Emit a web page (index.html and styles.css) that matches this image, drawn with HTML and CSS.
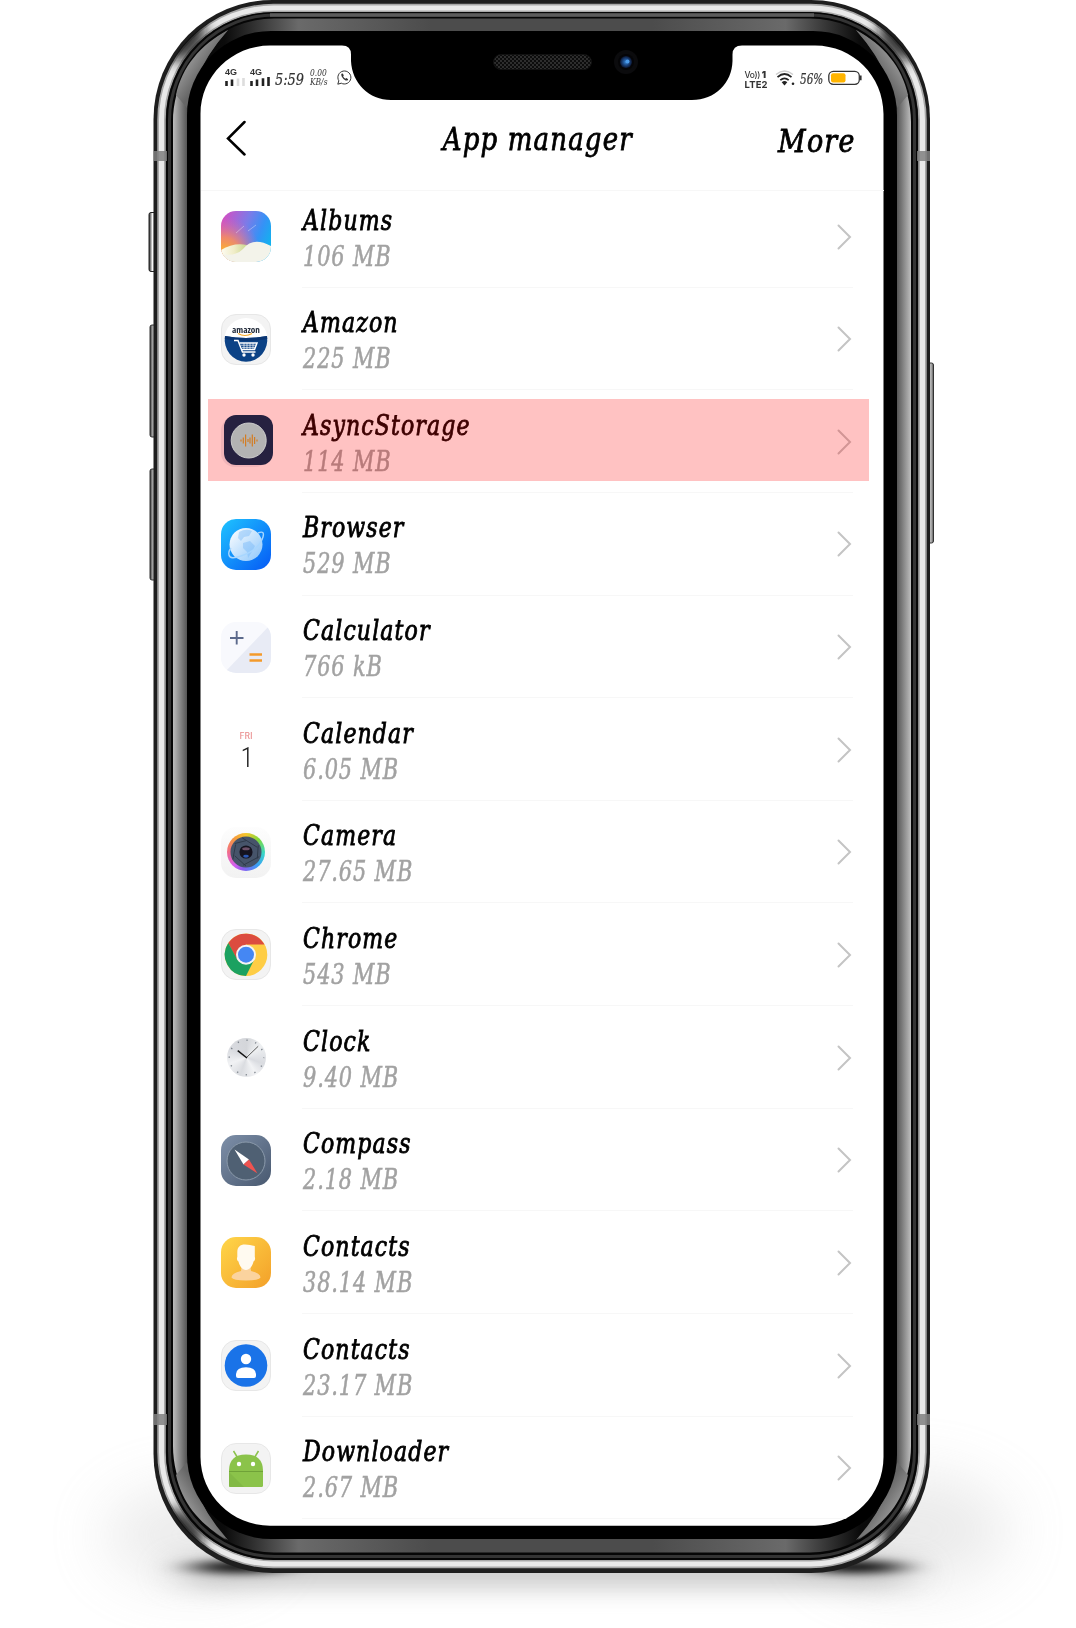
FILE: index.html
```html
<!DOCTYPE html>
<html lang="en">
<head>
<meta charset="utf-8">
<title>App manager</title>
<link rel="stylesheet" href="styles.css">
</head>
<body>
<div class="stage">
<svg class="device" viewBox="0 0 1076 1628" aria-hidden="true">
  <defs>
    <filter id="b5" x="-50%" y="-200%" width="200%" height="500%"><feGaussianBlur stdDeviation="18 4"/></filter>
    <filter id="b14" x="-50%" y="-200%" width="200%" height="500%"><feGaussianBlur stdDeviation="22 13"/></filter>
    <filter id="b30" x="-50%" y="-100%" width="200%" height="300%"><feGaussianBlur stdDeviation="30"/></filter>
    <filter id="b8" x="-50%" y="-50%" width="200%" height="200%"><feGaussianBlur stdDeviation="7"/></filter>
    <linearGradient id="topBevel"><stop offset="0" stop-color="#000"/><stop offset=".07" stop-color="#0b0b0b"/><stop offset=".17" stop-color="#6a6a6a"/><stop offset=".35" stop-color="#4c4c4c"/><stop offset=".65" stop-color="#4c4c4c"/><stop offset=".83" stop-color="#6a6a6a"/><stop offset=".93" stop-color="#0b0b0b"/><stop offset="1" stop-color="#000"/></linearGradient>
    <linearGradient id="sideL" gradientUnits="userSpaceOnUse" x1="173" x2="187"><stop offset="0" stop-color="#bdbdbd"/><stop offset="1" stop-color="#555"/></linearGradient>
    <linearGradient id="sideR" gradientUnits="userSpaceOnUse" x1="897" x2="911"><stop offset="0" stop-color="#555"/><stop offset="1" stop-color="#bdbdbd"/></linearGradient>
    <linearGradient id="bladeL" gradientUnits="userSpaceOnUse" x1="178" y1="60" x2="202" y2="76"><stop offset="0" stop-color="#aaa"/><stop offset="1" stop-color="#666"/></linearGradient>
    <linearGradient id="btn"><stop offset="0" stop-color="#222"/><stop offset=".3" stop-color="#999"/><stop offset=".6" stop-color="#bbb"/><stop offset="1" stop-color="#555"/></linearGradient>
    <linearGradient id="btnHi"><stop offset="0" stop-color="#222"/><stop offset=".45" stop-color="#fff"/><stop offset="1" stop-color="#555"/></linearGradient>
    <pattern id="mesh" width="4" height="4" patternUnits="userSpaceOnUse"><rect width="4" height="4" fill="#0c0c0c"/><circle cx="1" cy="1" r=".9" fill="#3c3c3c"/><circle cx="3" cy="3" r=".9" fill="#3c3c3c"/></pattern>
    <radialGradient id="lens"><stop offset="0" stop-color="#3c8ad8"/><stop offset=".5" stop-color="#1c4a88"/><stop offset="1" stop-color="#0b1530"/></radialGradient>
    <clipPath id="rim"><rect x="156" y="3" width="772" height="1566" rx="117"/></clipPath>
  </defs>
  <g>
    <ellipse cx="190" cy="1535" rx="85" ry="45" fill="#bbb" opacity=".3" filter="url(#b30)"/>
    <ellipse cx="910" cy="1530" rx="100" ry="55" fill="#bbb" opacity=".3" filter="url(#b30)"/>
    <rect x="180" y="1558" width="730" height="28" rx="14" fill="#888" opacity=".5" filter="url(#b14)"/>
    <ellipse cx="240" cy="1567" rx="48" ry="6" fill="#000" filter="url(#b5)"/>
    <ellipse cx="855" cy="1567" rx="48" ry="6" fill="#000" filter="url(#b5)"/>
  </g>
  <rect x="149" y="212.500" width="8" height="59" rx="2" fill="url(#btnHi)" stroke="#222"/>
  <rect x="150" y="325" width="7" height="112" rx="2" fill="url(#btn)" stroke="#333"/>
  <rect x="150" y="469" width="7" height="111" rx="2" fill="url(#btn)" stroke="#333"/>
  <rect x="927" y="363" width="6.500" height="180" rx="2" fill="url(#btn)" stroke="#333"/>
  <rect x="153.500" y="0" width="776.500" height="1573" rx="119" fill="#1e1e1e"/>
  <g clip-path="url(#rim)">
    <rect x="161.500" y="8" width="761" height="1556" rx="112" fill="none" stroke="#a8a8a8" stroke-width="8.500"/>
    <rect x="161.500" y="8" width="761" height="1556" rx="112" fill="none" stroke="#e9e9e9" stroke-width="5"/>
    <g fill="#111" opacity=".85" filter="url(#b8)">
      <ellipse cx="188" cy="42" rx="12" ry="24" transform="rotate(42 188 42)"/>
      <ellipse cx="896" cy="42" rx="12" ry="24" transform="rotate(-42 896 42)"/>
      <ellipse cx="186" cy="1528" rx="12" ry="24" transform="rotate(-42 186 1528)"/>
      <ellipse cx="898" cy="1528" rx="12" ry="24" transform="rotate(42 898 1528)"/>
    </g>
  </g>
  <rect x="166" y="12" width="752" height="1548" rx="108" fill="#060606"/>
  <rect x="169.500" y="15" width="745" height="1541.500" rx="105" fill="none" stroke="#343434" stroke-width="3"/>
  <path d="M270 15H814" stroke="#5c5c5c" stroke-width="3.500"/>
  <rect x="173" y="18.500" width="738" height="1534" rx="101" fill="url(#topBevel)"/>
  <path d="M173 122C173 85 192 50 228 30Q187 76 187 130V1440Q187 1492 226 1540C192 1520 173 1482 173 1446Z" fill="url(#sideL)"/>
  <path d="M911 122C911 85 892 50 856 30Q897 76 897 130V1440Q897 1492 858 1540C892 1520 911 1482 911 1446Z" fill="url(#sideR)"/>
  <path id="blade" d="M176 95C182 67 200 45 228 30Q205 56 195 82L187 108Z" fill="url(#bladeL)"/>
  <use href="#blade" transform="translate(1084) scale(-1 1)"/>
  <use href="#blade" transform="translate(0 1570) scale(1 -1)"/>
  <use href="#blade" transform="translate(1084 1570) scale(-1 -1)"/>
  <rect x="187" y="31" width="710" height="1508" rx="84" fill="#000"/>
  <path fill="#808080" opacity=".85" d="M154 151h13v10h-13zM917 151h13v10h-13zM154 1414h13v11h-13zM917 1414h13v11h-13z"/>
  <path d="M270 45.500H342Q351 45.500 351 54.500V61C352 83 369 100 391 100H692C715 100 732 83 732.500 61V54.500Q732.500 45.500 742 45.500H815C853 45.500 883.500 76 883.500 114V1457C883.500 1495 853 1525.700 815 1525.700H270C232 1525.700 200.500 1495 200.500 1457V114C200.500 76 232 45.500 270 45.500Z" fill="#fff"/>
  <rect x="493.500" y="54.500" width="98" height="15" rx="7.500" fill="url(#mesh)" stroke="#111"/>
  <circle cx="626" cy="62" r="12" fill="#0b0b0d"/><circle cx="626" cy="62" r="8" fill="#050507"/>
  <circle cx="626" cy="62" r="6" fill="url(#lens)"/><circle cx="627.500" cy="61.500" r="2" fill="#4b9bea"/>
</svg>

<main class="screen">
  <div class="status">
    <div class="status-left">
      <div class="signal"><b>4G</b><svg width="20" height="8" viewBox="0 0 20 8"><path d="M1.500 3v5M7 1.500v6.500" stroke="#222" stroke-width="2.600"/><path d="M13 .5v7.500M18.500 0v8" stroke="#ddd" stroke-width="2.600"/></svg></div>
      <div class="signal"><b>4G</b><svg width="20" height="9" viewBox="0 0 20 9"><path d="M1.500 4v5M7 2.500v6.500M13 1.300v7.700M18.500 0v9" stroke="#222" stroke-width="2.600"/></svg></div>
      <span class="time">5:59</span>
      <span class="rate">0.00<br>KB/s</span>
      <svg class="wa" width="15" height="15" viewBox="0 0 15 15"><path d="M.8 14.200L1.800 10.800A6.500 6.500 0 1 1 4.300 13.200Z" fill="none" stroke="#333" stroke-width="1"/><path d="M4.500 3.700C3.200 5.500 7.500 11.500 10.500 10.500L11.200 9.200L9.300 8L8.400 8.800Q6.800 8 6.100 6.300L6.800 5.400L5.800 3.500Z" fill="#333"/></svg>
    </div>
    <div class="status-right">
      <span class="volte"><span class="vo">Vo))</span><b>1</b><br>LTE2</span>
      <svg width="20" height="16" viewBox="0 0 20 16"><path d="M1 4.500Q9.500-2.500 18 4.500" fill="none" stroke="#ccc" stroke-width="1.400"/><path d="M2.500 7.200Q9.500.8 16.500 7.200M5.300 10.200Q9.500 6.500 13.700 10.200" fill="none" stroke="#222" stroke-width="1.700"/><path d="M6.700 12.200Q9.500 10 12.300 12.200L9.500 15.500Z" fill="#222"/><circle cx="18" cy="13.800" r="1.300" fill="#222"/></svg>
      <span class="percent">56%</span>
      <svg width="34" height="16" viewBox="0 0 34 16"><rect x=".8" y="1.300" width="30.500" height="13" rx="4.500" fill="#fff" stroke="#333" stroke-width="1.300"/><rect x="3" y="3.200" width="14.500" height="9.200" rx="2" fill="#ffb400"/><path d="M32.800 5.500v4.800" stroke="#333" stroke-width="1.600"/></svg>
    </div>
  </div>
  <header class="header">
    <svg class="back" width="21" height="36" viewBox="0 0 21 36"><path d="M18.500 2L2 18.500L18.500 34.500" fill="none" stroke="#000" stroke-width="2.500" stroke-linecap="round"/></svg>
    <h1>App manager</h1>
    <span class="more">More</span>
  </header>
  <ul class="list">
    <li class="row">
      <svg class="icon" viewBox="0 0 50 51"><defs><linearGradient id="al" x1="0" y1=".2" x2="1" y2=".6"><stop offset="0" stop-color="#d14fc4"/><stop offset=".45" stop-color="#7c7be8"/><stop offset=".75" stop-color="#3592f6"/><stop offset="1" stop-color="#12b2ee"/></linearGradient><radialGradient id="al2" cx=".05" cy=".85" r=".75"><stop offset="0" stop-color="#ffbe1c"/><stop offset=".45" stop-color="#fb8e5a" stop-opacity=".85"/><stop offset="1" stop-color="#e060b0" stop-opacity="0"/></radialGradient><linearGradient id="al3"><stop offset="0" stop-color="#fdfcf2"/><stop offset=".5" stop-color="#f0edc8"/><stop offset="1" stop-color="#c9d68c"/></linearGradient><clipPath id="sq"><rect width="50" height="51" rx="15"/></clipPath></defs><g clip-path="url(#sq)"><path fill="url(#al)" d="M0 0h50v51H0z"/><path fill="url(#al2)" d="M0 0h50v51H0z"/><path d="M0 39Q13 31 26 34L22 51H0Z" fill="url(#al3)"/><path d="M0 51V43Q14 46 22 38Q32 25 50 35V51Z" fill="#f3f3ea"/><path d="M15 22l8-7M27 20l8-6" stroke="#fff" stroke-opacity=".45" stroke-width=".8"/></g></svg>
      <div class="text"><span class="name">Albums</span><span class="size">106 MB</span></div>
      <svg class="chev" viewBox="0 0 15 26"><path d="M1.500 1.500L13 13L1.500 24.500"/></svg>
    </li>
    <li class="row">
      <svg class="icon" viewBox="0 0 50 51"><rect x=".5" y=".5" width="49" height="50" rx="14.500" fill="#f3f3f3" stroke="#e7e7e7"/><circle cx="25" cy="25.500" r="21.500" fill="#fff"/><path d="M4 22Q25 26 46 22A21.300 22 0 1 1 4 22Z" fill="#0b4286"/><path d="M4 22Q25 26 46 22L46.300 25Q25 29 3.800 25Z" fill="#0a3572"/><text x="25" y="18.500" text-anchor="middle" textLength="28" lengthAdjust="spacingAndGlyphs" font-family="Open Sans, sans-serif" font-weight="700" font-size="8" fill="#222b3a">amazon</text><path d="M17 19.500Q24 23.500 31 19.500" fill="none" stroke="#f5a623" stroke-width="1.200"/><g fill="none" stroke="#fff" stroke-width="1.500"><path d="M13 26.500h4l4.500 11.500h13"/><path d="M18.500 29h17.500l-2.500 6.500H21"/><path d="M20 31.200h15M21 33.400h14M23 29v6M26 29v6M29 29v6M32 29v6" stroke-width=".7"/></g><circle cx="23" cy="41" r="1.700" fill="#fff"/><circle cx="32" cy="41" r="1.700" fill="#fff"/></svg>
      <div class="text"><span class="name">Amazon</span><span class="size">225 MB</span></div>
      <svg class="chev" viewBox="0 0 15 26"><path d="M1.500 1.500L13 13L1.500 24.500"/></svg>
    </li>
    <li class="row marked">
      <svg class="icon async" viewBox="0 0 50 51"><rect x="0" y="3" width="48" height="50" rx="14" fill="#f0b4b8"/><rect x="3" y="1" width="49" height="50" rx="12" fill="#262140"/><circle cx="27.700" cy="26.500" r="17.500" fill="#b3b3b3" stroke="#ccc"/><path d="M20 25.500v2M22.300 23.500v6M24.600 20.500v12M27 25v3M29 23.500v6M31.300 20.500v12M33.600 23v7M36 25.500v2" stroke="#d37c22" stroke-width="1.200"/></svg>
      <div class="text"><span class="name">AsyncStorage</span><span class="size">114 MB</span></div>
      <svg class="chev" viewBox="0 0 15 26"><path d="M1.500 1.500L13 13L1.500 24.500"/></svg>
    </li>
    <li class="row">
      <svg class="icon" viewBox="0 0 50 51"><defs><linearGradient id="br" x1="0" y1="0" x2="1" y2="1"><stop offset="0" stop-color="#1fc4ff"/><stop offset="1" stop-color="#0559f5"/></linearGradient><linearGradient id="br2" x1="0" y1="0" x2="1" y2="1"><stop offset="0" stop-color="#fff"/><stop offset="1" stop-color="#8cc6fb"/></linearGradient></defs><rect width="50" height="51" rx="15" fill="url(#br)"/><circle cx="25" cy="25.500" r="16.500" fill="url(#br2)"/><path d="M18 13q7-4 13-1l-3 5-5 1-3 4-3-3zM22 24l7-2 5 5-2 4-5 8-1-6-4-4z" fill="#6db5f8" opacity=".4"/><path d="M37 14Q44 11 42 18Q38 31 20 37Q9 41 8 36Q7 33 10 29" fill="none" stroke="#a7d6ff" stroke-width="1.400"/></svg>
      <div class="text"><span class="name">Browser</span><span class="size">529 MB</span></div>
      <svg class="chev" viewBox="0 0 15 26"><path d="M1.500 1.500L13 13L1.500 24.500"/></svg>
    </li>
    <li class="row">
      <svg class="icon" viewBox="0 0 50 51"><g clip-path="url(#sq)"><path d="M0 0h50v51H0z" fill="#f8f9fd"/><path d="M50 2V51H3Z" fill="#e8ebf5"/></g><path d="M9 16h13.500M15.700 9v13.500" stroke="#5c6a8c" stroke-width="1.900"/><path d="M28.500 32.500H41M28.500 38.500H41" stroke="#f39a2b" stroke-width="2.300"/></svg>
      <div class="text"><span class="name">Calculator</span><span class="size">766 kB</span></div>
      <svg class="chev" viewBox="0 0 15 26"><path d="M1.500 1.500L13 13L1.500 24.500"/></svg>
    </li>
    <li class="row">
      <svg class="icon" viewBox="0 0 50 51"><text x="25" y="15" text-anchor="middle" font-family="Roboto, sans-serif" font-size="9.500" textLength="13" lengthAdjust="spacingAndGlyphs" fill="#e98b8b">FRI</text><text x="26" y="42.500" text-anchor="middle" font-family="Roboto, sans-serif" font-weight="300" font-size="27" fill="#222">1</text></svg>
      <div class="text"><span class="name">Calendar</span><span class="size">6.05 MB</span></div>
      <svg class="chev" viewBox="0 0 15 26"><path d="M1.500 1.500L13 13L1.500 24.500"/></svg>
    </li>
    <li class="row">
      <div class="icon camera"><div class="ring"><svg viewBox="0 0 34 34"><circle cx="17" cy="17" r="16.500" fill="#46546a"/><path d="M5 8L17 5M13 2L29 12M30 10L29 24M31 22L14 31M17 32L5 21M3 25L6 9" stroke="#2d3746" stroke-width="1" fill="none"/><circle cx="17" cy="17" r="7" fill="#15131f"/><ellipse cx="17" cy="13.500" rx="4" ry="1.600" fill="#6c5068"/><ellipse cx="17" cy="21.500" rx="3" ry="1.500" fill="#2b58b5"/></svg></div></div>
      <div class="text"><span class="name">Camera</span><span class="size">27.65 MB</span></div>
      <svg class="chev" viewBox="0 0 15 26"><path d="M1.500 1.500L13 13L1.500 24.500"/></svg>
    </li>
    <li class="row">
      <svg class="icon" viewBox="0 0 50 51"><rect x=".5" y=".5" width="49" height="50" rx="14.500" fill="#f3f3f3" stroke="#e7e7e7"/><circle cx="25" cy="25.700" r="21.300" fill="#fecd45"/><path d="M25 25.700L16 31 7.300 14A21.300 21.300 0 0 1 43.500 15.500H25Z" fill="#dc4c3f"/><path d="M7.300 14L16.500 31Q24 37 33 31L25 47A21.300 21.300 0 0 1 7.300 14Z" fill="#1ba160"/><circle cx="25" cy="25.700" r="10" fill="#f4f4f4"/><circle cx="25" cy="25.700" r="8" fill="#4587f3"/></svg>
      <div class="text"><span class="name">Chrome</span><span class="size">543 MB</span></div>
      <svg class="chev" viewBox="0 0 15 26"><path d="M1.500 1.500L13 13L1.500 24.500"/></svg>
    </li>
    <li class="row">
      <div class="icon clock"><svg viewBox="0 0 40 40"><circle cx="20" cy="20" r="17.700" fill="none" stroke="#7f868e" stroke-width="1.500" stroke-dasharray="1.300 7.968" stroke-dashoffset=".6"/><path d="M20 20L32 8.500" stroke="#555" stroke-width="1"/><path d="M20.500 20.500L11 13" stroke="#111" stroke-width="1.500"/></svg></div>
      <div class="text"><span class="name">Clock</span><span class="size">9.40 MB</span></div>
      <svg class="chev" viewBox="0 0 15 26"><path d="M1.500 1.500L13 13L1.500 24.500"/></svg>
    </li>
    <li class="row">
      <svg class="icon" viewBox="0 0 50 51"><defs><linearGradient id="co" x1="0" y1="0" x2="1" y2="1"><stop offset="0" stop-color="#7e90a9"/><stop offset="1" stop-color="#48586f"/></linearGradient></defs><rect width="50" height="51" rx="15" fill="url(#co)"/><circle cx="25" cy="26" r="19" fill="#4f6073" stroke="#8b9aab" stroke-width="1"/><path d="M13.500 14.500L28 24.500L22.500 29.500Z" fill="#fff"/><path d="M28 24.500L36.500 38.500L22.500 29.500Z" fill="#ef5350"/></svg>
      <div class="text"><span class="name">Compass</span><span class="size">2.18 MB</span></div>
      <svg class="chev" viewBox="0 0 15 26"><path d="M1.500 1.500L13 13L1.500 24.500"/></svg>
    </li>
    <li class="row">
      <svg class="icon" viewBox="0 0 50 51"><defs><linearGradient id="ct" x1="0" y1="0" x2="1" y2="1"><stop offset="0" stop-color="#ffd649"/><stop offset="1" stop-color="#f3a029"/></linearGradient></defs><rect width="50" height="51" rx="15" fill="url(#ct)"/><path d="M20.500 30L20 34Q10.500 36 10.500 40.500Q12 43.500 25 43.500T39.500 40.500Q39.500 36 30 34L29.500 30Z" fill="#fbd39e"/><path d="M16.300 20V15C16.300 10 19 7.500 24 7.500C28 7.500 30 8.500 33.800 9V20C34.500 21 34 24 32.500 24.500C31.500 29 28.500 33 25 33S18.500 29 17.500 24.500C16 24 15.500 21 16.300 20Z" fill="#fffaf0"/></svg>
      <div class="text"><span class="name">Contacts</span><span class="size">38.14 MB</span></div>
      <svg class="chev" viewBox="0 0 15 26"><path d="M1.500 1.500L13 13L1.500 24.500"/></svg>
    </li>
    <li class="row">
      <svg class="icon" viewBox="0 0 50 51"><rect x=".5" y=".5" width="49" height="50" rx="14.500" fill="#f3f3f3" stroke="#e7e7e7"/><circle cx="25" cy="25.500" r="21.300" fill="#1a73e8"/><circle cx="25" cy="19" r="5.200" fill="#fff"/><path d="M15 34Q15.500 27.500 25 27.300Q34.500 27.500 35 34V36Q35 38 33 38H17Q15 38 15 36Z" fill="#fff"/></svg>
      <div class="text"><span class="name">Contacts</span><span class="size">23.17 MB</span></div>
      <svg class="chev" viewBox="0 0 15 26"><path d="M1.500 1.500L13 13L1.500 24.500"/></svg>
    </li>
    <li class="row">
      <svg class="icon" viewBox="0 0 50 51"><rect x=".5" y=".5" width="49" height="50" rx="14.500" fill="#f3f3f3" stroke="#e7e7e7"/><path d="M12.500 8l4 6.500M37.500 8l-4 6.500" stroke="#8bc34a" stroke-width="1.500"/><path d="M8 28Q8 11.500 25 11.500T42 28V42.500Q42 44 40.500 44H9.500Q8 44 8 42.500Z" fill="#8bc34a"/><path d="M8 28.500h34" stroke="#6fa238"/><path d="M8 29L23 44H9.500Q8 44 8 42.500Z" fill="#82b945"/><circle cx="18" cy="21" r="2.200" fill="#fff"/><circle cx="32" cy="21" r="2.200" fill="#fff"/></svg>
      <div class="text"><span class="name">Downloader</span><span class="size">2.67 MB</span></div>
      <svg class="chev" viewBox="0 0 15 26"><path d="M1.500 1.500L13 13L1.500 24.500"/></svg>
    </li>
  </ul>
</main>
</div>
</body>
</html>
```
FILE: styles.css
```css
* { box-sizing: border-box; }
body { margin: 0; background: #fff; }
.stage { position: relative; width: 1076px; height: 1628px; overflow: hidden; padding: 45px 192.5px 0 201px; }
.device { position: absolute; inset: 0; width: 1076px; height: 1628px; }
.screen { position: relative; height: 1480.700px; overflow: hidden; border-radius: 0 0 69px 69px; font-family: "DejaVu Serif Condensed", "DejaVu Serif", serif; font-stretch: condensed; font-style: italic; }

.status { display: flex; justify-content: space-between; height: 60px; padding: 23px 22px 0 24px; color: #333; }
.status-left, .status-right { display: flex; align-items: flex-start; height: 22px; }
.signal { display: flex; flex-direction: column; width: 20px; height: 18px; justify-content: space-between; margin-right: 5px; font: 700 9px/9px "Liberation Sans", sans-serif; }
.signal b { height: 9px; }
.time { width: 33px; font-size: 17.500px; line-height: 23px; transform: scaleX(.82); transform-origin: 0 0; white-space: nowrap; -webkit-text-stroke: .2px #333; }
.rate { width: 25px; margin-left: 2px; padding-top: 1px; font-size: 8.500px; line-height: 9px; white-space: nowrap; transform: scaleX(.98); transform-origin: 0 0; }
.wa { margin: 2px 0 0 2px; }
.volte { width: 25px; margin-right: 5px; padding-top: 2px; font: 700 9.500px/9px "Inter", sans-serif; white-space: nowrap; letter-spacing: .15px; }
.vo { font-weight: 500; font-size: 8.500px; letter-spacing: -.3px; margin-right: 1.500px; }
.status-right svg { margin-top: 2px; }
.percent { width: 23px; margin: 0 5px; font-size: 14px; line-height: 22px; transform: scaleX(.83); transform-origin: 0 0; -webkit-text-stroke: .2px #333; }

.header { display: grid; grid-template-columns: 180px 1fr 180px; align-items: start; height: 85.500px; padding: 0 26px 0 25px; border-bottom: 1.500px solid #f7f7f7; color: #000; -webkit-text-stroke: .8px #000; }
.back { margin-top: 15px; }
h1 { justify-self: center; margin: 13.500px 0 0 -8px; font-size: 32.500px; line-height: 40px; font-weight: 400; letter-spacing: 1.300px; white-space: nowrap; transform: scaleX(.89); }
.more { justify-self: end; margin: 16px 2px 0 0; font-size: 31.500px; line-height: 40px; letter-spacing: 1.300px; transform: scaleX(.95); transform-origin: 100% 0; }

.list { margin: -5.500px 0 0; padding: 0; list-style: none; }
.row { position: relative; display: flex; height: 102.650px; padding: 0 31px 0 20px; }
.icon { flex: none; width: 50px; height: 51px; margin: 26px 31px 0 0; overflow: visible; font-style: normal; }
.text { flex: 1; display: flex; flex-direction: column; align-items: flex-start; padding: 17.500px 0 0 1px; border-bottom: 1.500px solid #f7f7f7; white-space: nowrap; }
.name { height: 36px; line-height: 36px; font-size: 27.200px; letter-spacing: 1.250px; color: #000; -webkit-text-stroke: .8px #000; transform: scaleX(.9); transform-origin: 0 0; }
.size { height: 36px; line-height: 36px; font-size: 27.200px; letter-spacing: 1px; color: #a2a2a2; -webkit-text-stroke: .5px #a2a2a2; transform: scaleX(.855); transform-origin: 0 0; }
.chev { position: absolute; right: 31.500px; top: 38.500px; width: 15px; height: 26px; fill: none; stroke: #c4c4c4; stroke-width: 2; stroke-linecap: round; }
.marked::after { content: ""; position: absolute; left: 7px; top: 9px; width: 661px; height: 82px; background: rgba(255, 0, 0, .24); }
.async { position: relative; z-index: 1; margin-top: 24px; }
.camera { display: grid; place-items: center; border-radius: 15px; background: linear-gradient(#fdfdfd, #f2f2f2); }
.ring { display: grid; place-items: center; width: 38px; height: 38px; border-radius: 50%; background: conic-gradient(#f6c62b, #7fd93b 45deg, #37d6c9 95deg, #3a9ef5 140deg, #8b5cf0 190deg, #d45df0 220deg, #f26d8a 270deg, #f59b3d 320deg, #f6c62b); }
.ring svg { width: 32px; height: 32px; }
.clock { display: grid; place-items: center; }
.clock svg { width: 39px; height: 39px; border-radius: 50%; background: conic-gradient(#d4d6da, #eef0f2 50deg, #d9dbe0 110deg, #f2f3f5 150deg, #dadce0 200deg, #f1f2f4 250deg, #d8dadf 300deg, #d4d6da); }
```
